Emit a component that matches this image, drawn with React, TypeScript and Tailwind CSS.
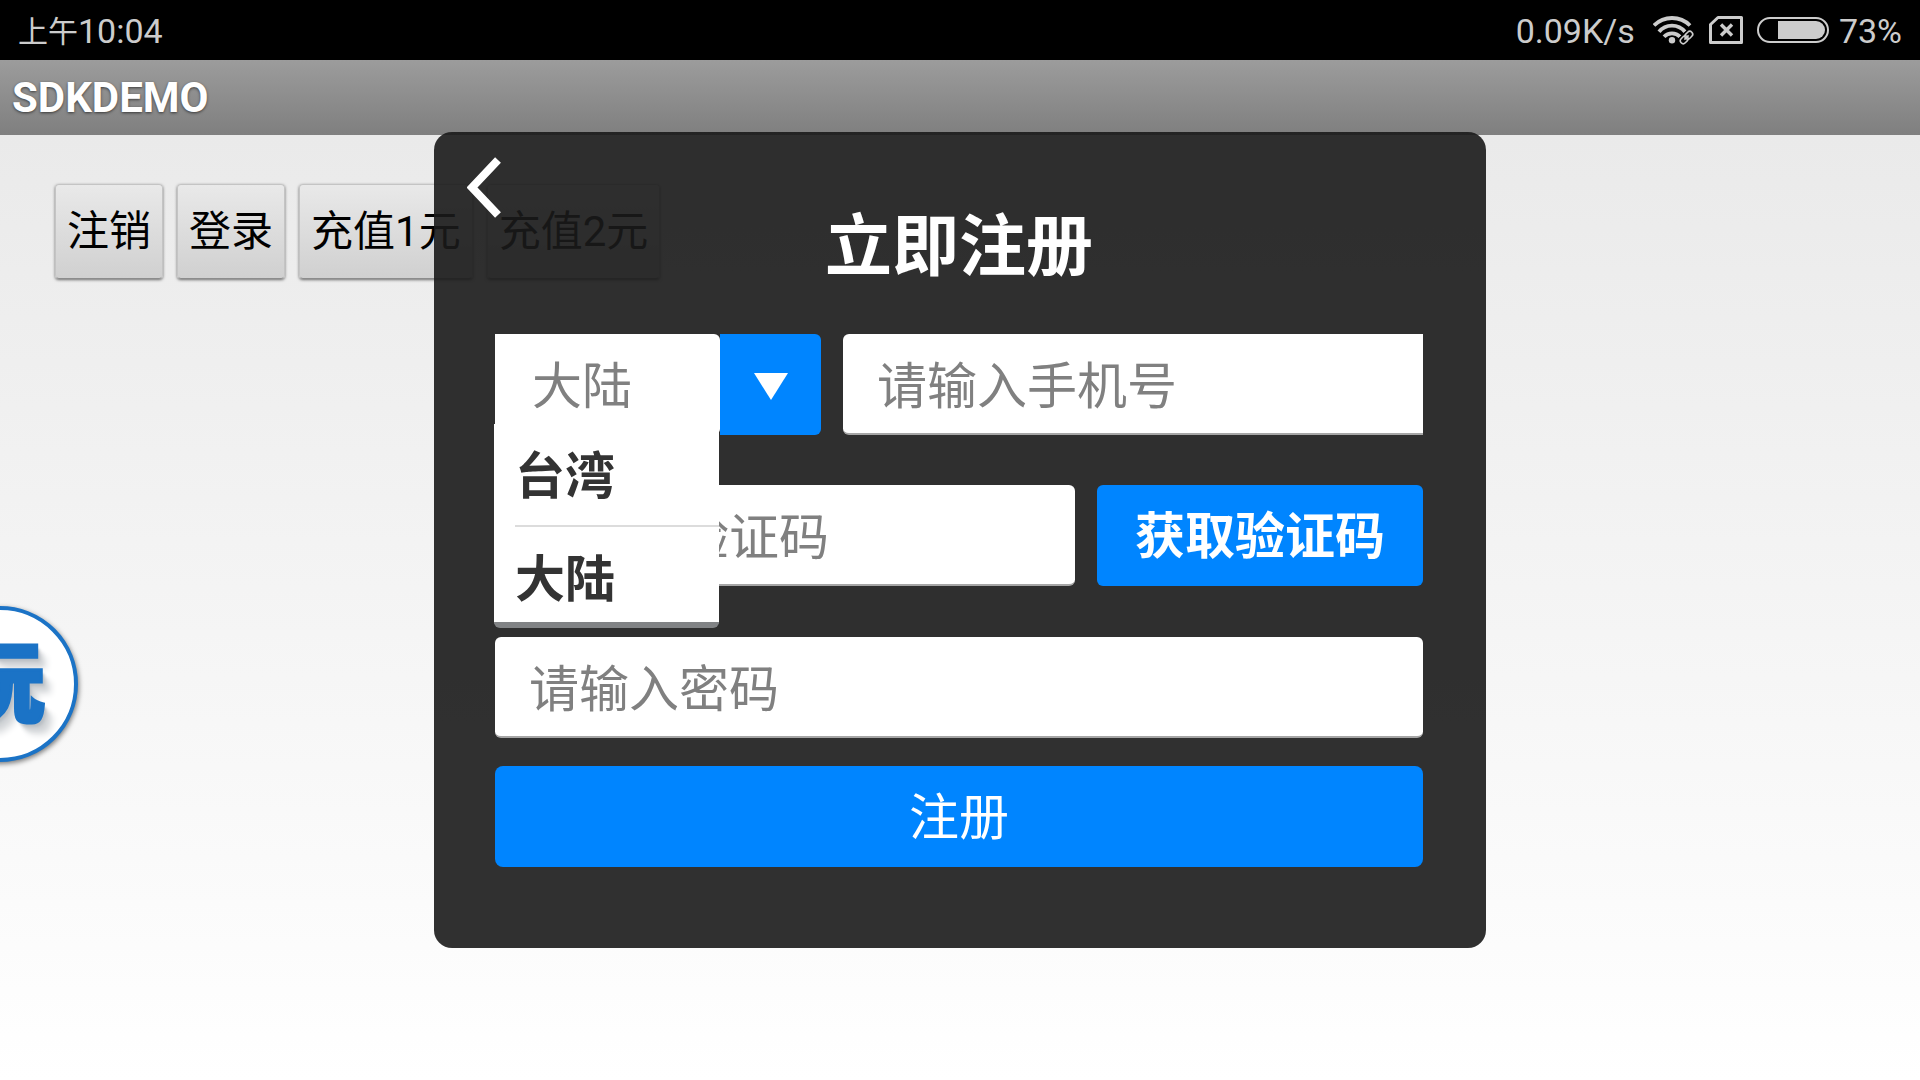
import React, { useState } from 'react';
import clsx from 'clsx';

const actions = ['注销', '登录', '充值1元', '充值2元'];
const regions = ['台湾', '大陆'];

const field =
  'h-[101px] min-w-0 border-b-2 border-[#a6a6a6] bg-white pl-[34px] pt-[6px] text-[50px] text-[#2e2e2e] placeholder:text-[#808080] outline-none';

const WifiIcon: React.FC = () => (
  <svg width="42" height="30" viewBox="0 0 42 30" fill="none" stroke="#cccccc" strokeWidth="3.8">
    <path d="M1 10.5A25.4 25.4 0 0 1 37 10.5" />
    <path d="M6 16.8A16.7 16.7 0 0 1 32 16.8" />
    <path d="M11 21.8A10.9 10.9 0 0 1 27 21.8" />
    <circle cx="19" cy="25.2" r="3.2" fill="#cccccc" stroke="none" />
    <g transform="rotate(-45 33.5 22.5)">
      <rect x="24.5" y="17.5" width="18" height="10" rx="4" fill="#000000" stroke="none" />
      <rect x="26" y="19.6" width="8.5" height="5.8" rx="2.9" strokeWidth="1.6" />
      <rect x="32.5" y="19.6" width="8.5" height="5.8" rx="2.9" strokeWidth="1.6" />
      <path d="M30.5 22.5h6" strokeWidth="1.6" />
    </g>
  </svg>
);

const NoSimIcon: React.FC = () => (
  <svg width="34" height="28" viewBox="0 0 34 28" fill="none" stroke="#cccccc">
    <path d="M9 1.5h23.5v25h-31V8.5z" strokeWidth="3" strokeLinejoin="round" />
    <path d="M12 8.5l11 11M23 8.5l-11 11" strokeWidth="3.4" />
  </svg>
);

const BatteryIcon: React.FC = () => (
  <svg width="72" height="26" viewBox="0 0 72 26">
    <rect x="1" y="1" width="70" height="24" rx="12" fill="none" stroke="#cccccc" strokeWidth="2" />
    <path d="M21 4h38a9 9 0 0 1 0 18H21z" fill="#cccccc" />
  </svg>
);

const StatusBar: React.FC = () => (
  <div className="flex h-[60px] items-center justify-between bg-black px-[18px] text-[34px] text-[#cccccc]">
    <div className="flex items-center pt-0.5">
      <span className="text-[30px]">上午</span>
      <span>10:04</span>
    </div>
    <div className="flex items-center">
      <span className="mr-[18px] pt-0.5">0.09K/s</span>
      <WifiIcon />
      <span className="mx-[14px]">
        <NoSimIcon />
      </span>
      <BatteryIcon />
      <span className="ml-[10px] pt-0.5">73%</span>
    </div>
  </div>
);

const FloatingBall: React.FC = () => (
  <button
    type="button"
    className="absolute -left-[78px] top-[606px] flex size-[156px] items-center justify-center rounded-full border-4 border-[#1b73c6] bg-white text-[88px] font-black leading-none text-[#1b73c6] shadow-[1px_2px_5px_rgba(0,0,0,0.5)] [-webkit-text-stroke:3px_#1b73c6] [text-shadow:3px_4px_3px_#b9bec3,6px_8px_4px_#d0d3d6,10px_12px_6px_#e0e2e4]"
  >
    玩
  </button>
);

const RegionPicker: React.FC = () => {
  const [open, setOpen] = useState(true);
  const [region, setRegion] = useState('大陆');

  const pick = (name: string) => {
    setRegion(name);
    setOpen(false);
  };

  return (
    <div className="relative flex h-[101px] w-[326px] shrink-0">
      <select
        aria-label="地区"
        value={region}
        onChange={(e) => pick(e.target.value)}
        className="min-w-0 flex-1 appearance-none rounded-r-md bg-white pl-[37px] pt-[6px] text-[50px] text-[#808080] outline-none"
      >
        {regions.map((name) => (
          <option key={name}>{name}</option>
        ))}
      </select>
      <button
        type="button"
        aria-label="选择地区"
        onClick={() => setOpen(!open)}
        className="flex w-[101px] items-center justify-center rounded-r-md bg-[#0085ff] pt-1"
      >
        <svg width="34" height="27" viewBox="0 0 34 27" fill="#ffffff">
          <path d="M0 0h34L17 27z" />
        </svg>
      </button>
      {open && (
        <ul className="absolute -left-px top-[90px] z-10 h-[204px] w-[225px] overflow-hidden rounded-b-md border-b-[6px] border-[#818385] bg-white pl-[21px]">
          {regions.map((name, i) => (
            <li key={name} className={clsx(i > 0 && 'border-t-2 border-[#dcdcdc]')}>
              <button
                type="button"
                onClick={() => pick(name)}
                className="block w-full pt-[5px] text-left text-[50px] font-bold leading-[96px] text-[#333333]"
              >
                {name}
              </button>
            </li>
          ))}
        </ul>
      )}
    </div>
  );
};

const RegisterDialog: React.FC = () => (
  <div className="absolute inset-0 flex items-center justify-center">
    <form
      onSubmit={(e) => e.preventDefault()}
      className="relative w-full max-w-[1052px] rounded-[18px] bg-[rgba(25,25,25,0.9)] pb-[81px] pl-[61px] pr-[63px] pt-[75px]"
    >
      <button type="button" aria-label="返回" className="absolute left-[33px] top-[25px]">
        <svg width="34" height="61" viewBox="0 0 34 61" fill="none" stroke="#ffffff" strokeWidth="8">
          <path d="M31 3L5 30.5L31 58" />
        </svg>
      </button>

      <h1 className="mb-[47px] text-center text-[67px] font-bold leading-[80px] text-white">立即注册</h1>

      <div className="flex gap-[22px]">
        <RegionPicker />
        <input type="tel" aria-label="手机号" placeholder="请输入手机号" className={clsx(field, 'flex-1 rounded-l-md')} />
      </div>

      <div className="mt-[50px] flex gap-[22px]">
        <input type="text" aria-label="验证码" placeholder="请输入验证码" className={clsx(field, 'flex-1 rounded-md')} />
        <button type="button" className="w-[326px] shrink-0 rounded-md bg-[#0085ff] pt-1 text-[50px] font-bold text-white">
          获取验证码
        </button>
      </div>

      <input
        type="password"
        aria-label="密码"
        placeholder="请输入密码"
        className={clsx(field, 'mt-[51px] block w-full rounded-md')}
      />

      <button type="submit" className="mt-7 block h-[101px] w-full rounded-lg bg-[#0085ff] pt-1 text-[50px] text-white">
        注册
      </button>
    </form>
  </div>
);

export default function App() {
  return (
    <div className="relative flex min-h-screen flex-col overflow-hidden font-['Roboto','Noto_Sans_CJK_SC',sans-serif]">
      <StatusBar />
      <header className="flex h-[75px] items-center bg-linear-to-b from-[#9c9c9c] to-[#7f7f7f] pl-3 text-[42px] font-bold text-white [text-shadow:0_1px_3px_rgba(0,0,0,0.6)]">
        SDKDEMO
      </header>
      <main className="flex-1 bg-linear-to-b from-[#eaeaea] to-white px-[55px] pt-[49px]">
        <div className="flex gap-[14px]">
          {actions.map((label) => (
            <button
              key={label}
              type="button"
              className="h-[95px] rounded-sm border border-[#c4c4c4] border-b-[#8c8c8c] bg-linear-to-b from-[#e9e9e9] to-[#d0d0d0] px-[11px] text-[42px] text-black shadow-[0_1px_3px_rgba(0,0,0,0.55)]"
            >
              {label}
            </button>
          ))}
        </div>
      </main>
      <FloatingBall />
      <RegisterDialog />
    </div>
  );
}
